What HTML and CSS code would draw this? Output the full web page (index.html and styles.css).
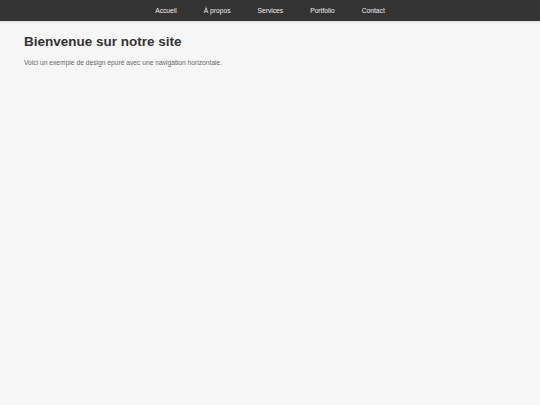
FILE: index.html
```html
<!DOCTYPE html>
<html lang="fr">
<head>
<meta charset="utf-8">
<title>Bienvenue</title>
<link rel="stylesheet" href="styles.css">
</head>
<body>
<nav class="nav">
  <a href="#">Accueil</a>
  <a href="#">À propos</a>
  <a href="#">Services</a>
  <a href="#">Portfolio</a>
  <a href="#">Contact</a>
</nav>
<main class="content">
  <h1>Bienvenue sur notre site</h1>
  <p>Voici un exemple de design épuré avec une navigation horizontale.</p>
</main>
</body>
</html>
```

FILE: styles.css
```css
html, body {
  margin: 0;
  padding: 0;
}
body {
  background: #f6f6f6;
  font-family: "Liberation Sans", Arial, sans-serif;
  color: #333;
  min-height: 405px;
}
.nav {
  background: #333;
  height: 21px;
  display: flex;
  justify-content: center;
  align-items: center;
  box-shadow: 0 1px 2px rgba(0,0,0,0.12);
}
.nav a {
  color: #f0f0f0;
  text-decoration: none;
  font-size: 6.7px;
  padding: 0 13.5px;
}
.content {
  padding: 13px 24px;
}
h1 {
  font-size: 13.5px;
  margin: 0 0 10px;
  color: #333;
}
p {
  font-size: 6.7px;
  margin: 0;
  color: #666;
}
```
